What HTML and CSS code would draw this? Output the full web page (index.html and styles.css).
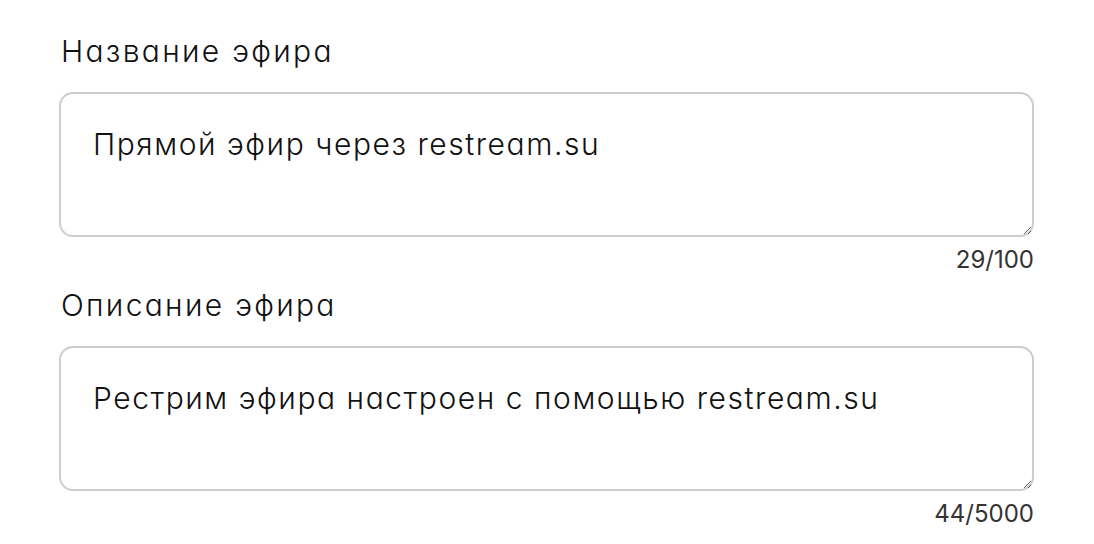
FILE: index.html
```html
<!DOCTYPE html>
<html lang="ru">
<head>
<meta charset="utf-8">
<title>Эфир</title>
<link rel="stylesheet" href="styles.css">
</head>
<body>
<form class="form">
  <div class="field">
    <label class="label" for="title">Название эфира</label>
    <textarea class="input" id="title">Прямой эфир через restream.su</textarea>
    <div class="counter">29/100</div>
  </div>
  <div class="field">
    <label class="label" for="desc">Описание эфира</label>
    <textarea class="input" id="desc">Рестрим эфира настроен с помощью restream.su</textarea>
    <div class="counter">44/5000</div>
  </div>
</form>
</body>
</html>
```
FILE: styles.css
```css
html, body {
  margin: 0;
  background: #fff;
}
body {
  font-family: Inter, "Noto Sans", sans-serif;
  font-feature-settings: "cv11" 1;
  color: #111;
}
.form {
  display: flex;
  flex-direction: column;
  gap: 13px;
  width: 975px;
  padding: 33px 0 0 59px;
}
.field {
  display: flex;
  flex-direction: column;
}
.label {
  font-size: 30px;
  font-weight: 350;
  line-height: 36px;
  letter-spacing: 2.3px;
  padding-left: 2px;
  margin-bottom: 23px;
}
.input {
  box-sizing: border-box;
  height: 145px;
  width: 100%;
  border: 2px solid #cdcdcd;
  border-radius: 14px;
  padding: 32px;
  font-family: inherit;
  font-feature-settings: "cv11" 1;
  font-size: 30px;
  font-weight: 350;
  line-height: 36px;
  letter-spacing: 1.55px;
  color: #111;
  outline: none;
  margin: 0;
}
.counter {
  align-self: flex-end;
  font-size: 24px;
  line-height: 28px;
  margin-top: 9px;
  color: #333;
}
```
